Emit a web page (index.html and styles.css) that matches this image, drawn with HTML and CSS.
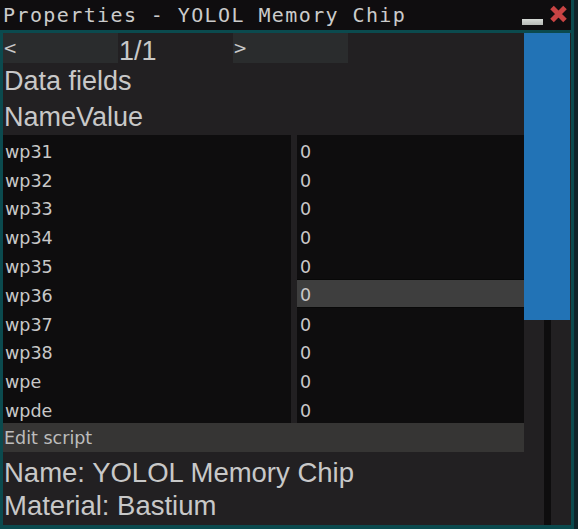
FILE: index.html
```html
<!DOCTYPE html>
<html>
<head>
<meta charset="utf-8">
<link rel="stylesheet" href="styles.css">
</head>
<body>
<div class="window">
  <div class="titlebar">
    <span class="title">Properties - YOLOL Memory Chip</span>
    <div class="controls">
      <span class="minimize"></span>
      <svg class="close" width="19" height="18" viewBox="0 0 19 18">
        <path d="M3 2.5 L16 15.5 M16 2.5 L3 15.5" stroke="#c94444" stroke-width="5" stroke-linecap="butt"/>
      </svg>
    </div>
  </div>
  <div class="body">
    <div class="main">
      <div class="pager">
        <div class="pbtn">&lt;</div>
        <div class="pcount">1/1</div>
        <div class="pbtn">&gt;</div>
      </div>
      <div class="heading">Data fields</div>
      <div class="heading">NameValue</div>
      <div class="table">
        <div class="cell">wp31</div><div class="cell val">0</div>
        <div class="cell">wp32</div><div class="cell val">0</div>
        <div class="cell">wp33</div><div class="cell val">0</div>
        <div class="cell">wp34</div><div class="cell val">0</div>
        <div class="cell">wp35</div><div class="cell val">0</div>
        <div class="cell">wp36</div><div class="cell val active">0</div>
        <div class="cell">wp37</div><div class="cell val">0</div>
        <div class="cell">wp38</div><div class="cell val">0</div>
        <div class="cell">wpe</div><div class="cell val">0</div>
        <div class="cell">wpde</div><div class="cell val">0</div>
      </div>
      <div class="editbar">Edit script</div>
      <div class="info">
        <div class="line">Name: YOLOL Memory Chip</div>
        <div class="line">Material: Bastium</div>
      </div>
    </div>
    <div class="scrollbar">
      <div class="thumb"></div>
      <div class="track"><div class="stripe"></div></div>
    </div>
  </div>
</div>
</body>
</html>
```

FILE: styles.css
```css
html, body {
  margin: 0;
  padding: 0;
}
body {
  background: #10242a;
  width: 578px;
  height: 529px;
  overflow: hidden;
  font-family: "Liberation Sans", Arial, sans-serif;
  color: #c8c8c8;
}
.window {
  width: 571px;
  height: 529px;
  border-right: 3px solid #0b4a4e;
  display: flex;
  flex-direction: column;
}
.titlebar {
  height: 30px;
  background: #0f0d0f;
  display: flex;
  align-items: center;
  padding-left: 3px;
  flex: none;
}
.title {
  font-family: "DejaVu Sans Mono", monospace;
  font-size: 20px;
  letter-spacing: 1.4px;
  color: #cbcbcb;
  white-space: nowrap;
  flex: 1;
}
.controls {
  display: flex;
  align-items: flex-start;
  height: 30px;
  padding-right: 3px;
}
.minimize {
  width: 21px;
  height: 6px;
  margin-top: 19px;
  margin-right: 6px;
  background: linear-gradient(#d6dad6, #b6bab6);
}
.close {
  margin-top: 5px;
  display: block;
}
.body {
  flex: 1;
  display: flex;
  background: #222022;
  border-top: 3px solid #0b4a4e;
  border-left: 3px solid #0b4a4e;
  border-bottom: 4px solid #0b4a4e;
  min-height: 0;
}
.main {
  width: 521px;
  display: flex;
  flex-direction: column;
}
.pager {
  height: 30px;
  display: flex;
  align-items: flex-start;
  flex: none;
}
.pbtn {
  width: 115px;
  height: 30px;
  background: #2a2c2d;
  font-family: "DejaVu Sans", sans-serif;
  font-size: 17px;
  line-height: 30px;
  color: #c8c8c8;
}
.pcount {
  width: 115px;
  padding-left: 1px;
  box-sizing: border-box;
  font-size: 27px;
  line-height: 27px;
  margin-top: 5px;
}
.heading {
  height: 36px;
  line-height: 36px;
  font-size: 27px;
  padding-left: 1px;
  white-space: nowrap;
}
.table {
  display: grid;
  grid-template-columns: 288px 227px;
  grid-auto-rows: 28.8px;
  column-gap: 6px;
  height: 288px;
  flex: none;
}
.cell {
  background: #0e0d0e;
  font-family: "DejaVu Sans", sans-serif;
  font-size: 17.5px;
  padding: 5px 0 0 2px;
  box-sizing: border-box;
  display: flex;
  align-items: center;
  color: #c8c8c8;
}
.val {
  padding-left: 3px;
}
.active {
  background: #3e3e3e;
  border-top: 1px solid #080808;
  border-bottom: 1px solid #080808;
  padding-top: 4px;
}
.editbar {
  height: 29px;
  box-sizing: border-box;
  padding: 2px 0 0 1px;
  line-height: 27px;
  background: #363534;
  font-family: "DejaVu Sans", sans-serif;
  font-size: 17.5px;
  color: #bdbdbd;
  flex: none;
}
.info {
  padding-top: 4px;
}
.line {
  height: 33px;
  line-height: 33px;
  font-size: 27.5px;
  padding-left: 1px;
  white-space: nowrap;
}
.scrollbar {
  width: 47px;
  display: flex;
  flex-direction: column;
}
.thumb {
  height: 287px;
  width: 46px;
  background: #2273b6;
  flex: none;
}
.track {
  flex: 1;
  padding-left: 20px;
}
.stripe {
  width: 7px;
  height: 100%;
  background: #0e0d0e;
}
```
